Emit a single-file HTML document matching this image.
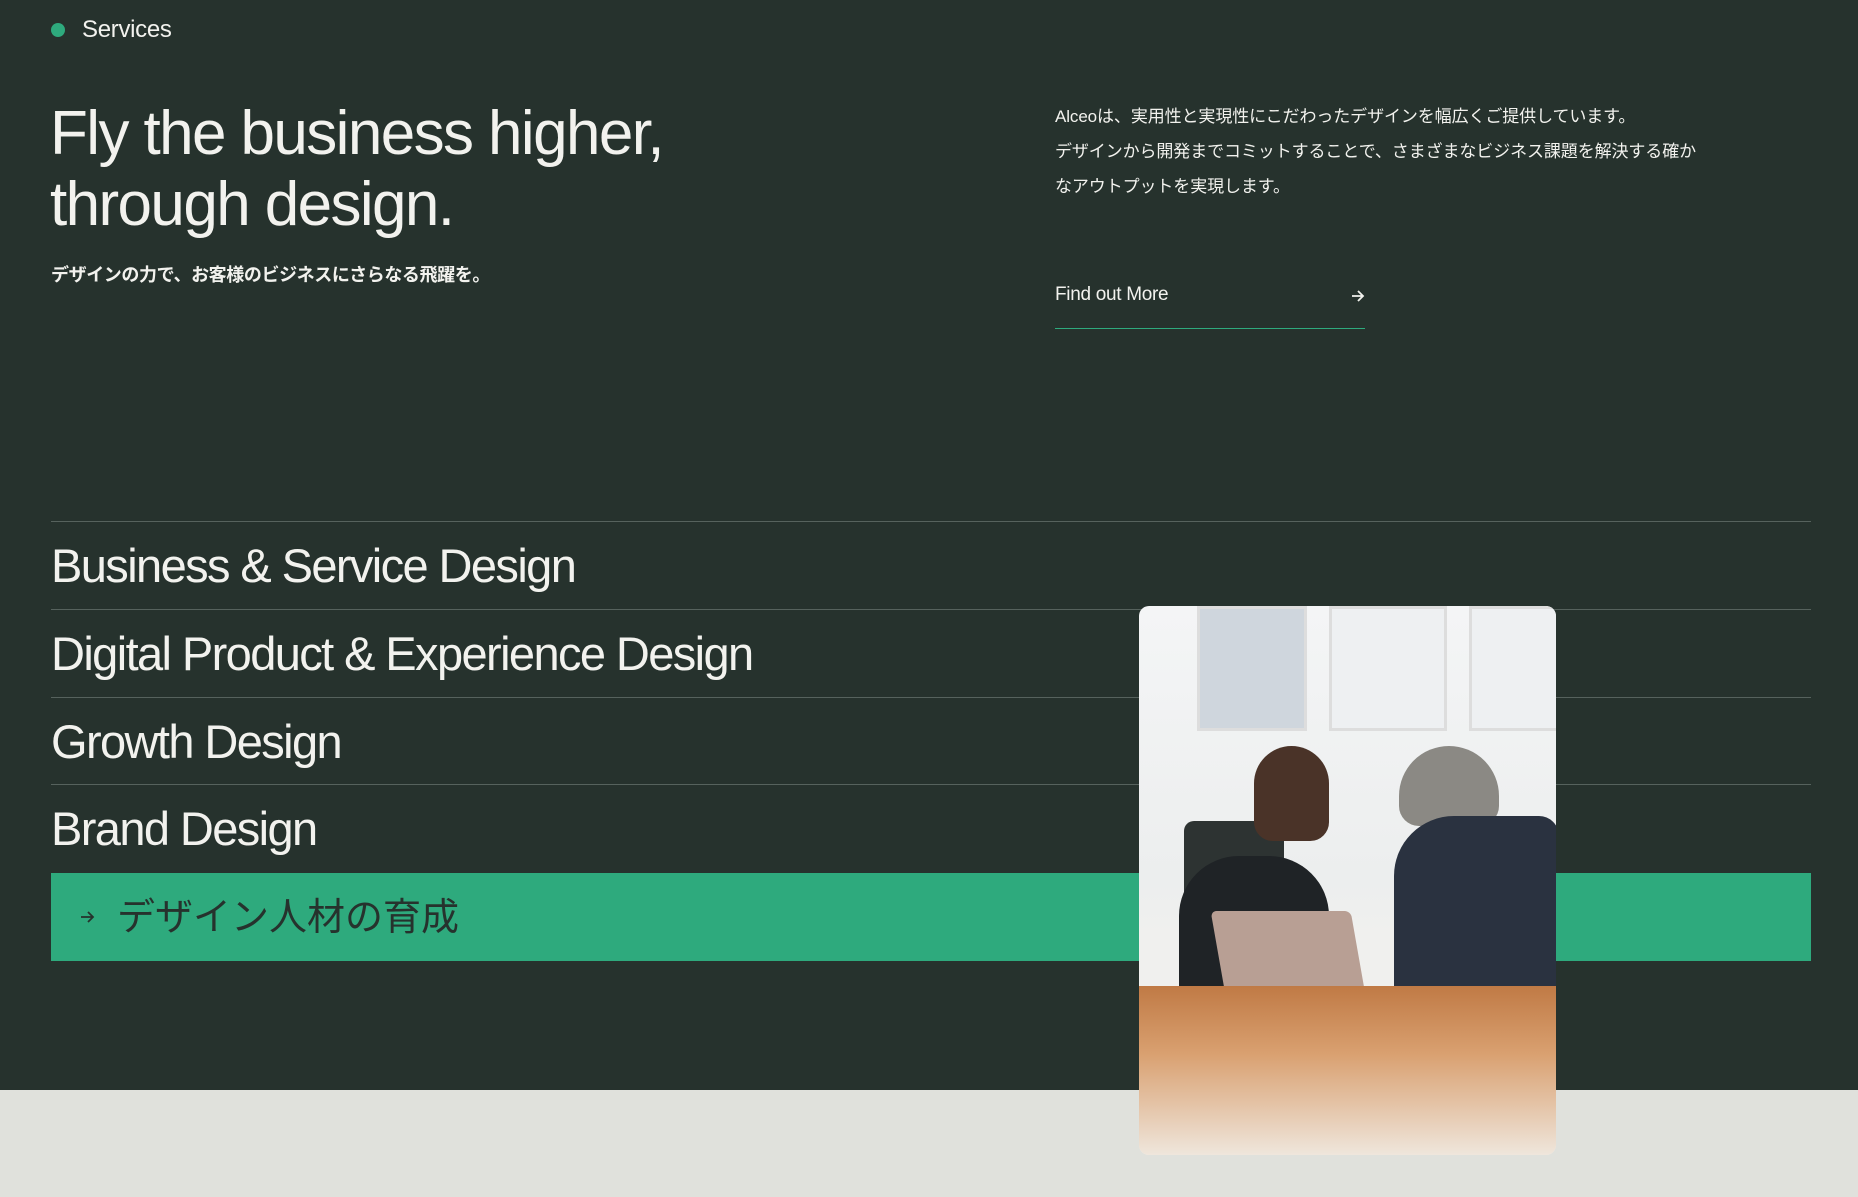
<!DOCTYPE html>
<html><head><meta charset="utf-8"><style>
*{margin:0;padding:0;box-sizing:border-box}
body{width:1858px;height:1197px;background:#e0e1dc;font-family:"Liberation Sans","Noto Sans CJK JP",sans-serif;position:relative;overflow:hidden}
.dark{position:absolute;left:0;top:0;width:1858px;height:1090px;background:#26322d}
.a{position:absolute;color:#f2f2ee;white-space:nowrap}
.line{position:absolute;left:51px;width:1760px;height:1px;background:#56625d}
.item{position:absolute;left:51px;font-size:47px;color:#f2f2ee;line-height:1;letter-spacing:-1.6px}
</style></head><body>
<div class="dark"></div>
<div style="position:absolute;left:51px;top:23px;width:14px;height:14px;border-radius:50%;background:#2eaa7d"></div>
<div class="a" style="left:82px;top:16px;font-size:24px;letter-spacing:-0.3px">Services</div>
<div class="a" style="left:50px;top:98px;font-size:62px;line-height:71px;letter-spacing:-1.6px">Fly the business higher,<br>through design.</div>
<div class="a" style="left:51px;top:261px;font-size:18px;font-weight:bold;letter-spacing:-0.4px">デザインの力で、お客様のビジネスにさらなる飛躍を。</div>
<div class="a" style="left:1055px;top:99px;font-size:17px;line-height:35px;letter-spacing:-0.1px">Alceoは、実用性と実現性にこだわったデザインを幅広くご提供しています。<br>デザインから開発までコミットすることで、さまざまなビジネス課題を解決する確か<br>なアウトプットを実現します。</div>
<div class="a" style="left:1055px;top:284px;font-size:19px;letter-spacing:-0.3px">Find out More</div>
<svg style="position:absolute;left:1350px;top:288px" width="16" height="16" viewBox="0 0 16 16"><path d="M2 8h11M8 3l5 5-5 5" stroke="#f2f2ee" stroke-width="1.8" fill="none"/></svg>
<div style="position:absolute;left:1055px;top:328px;width:310px;height:1px;background:#2eaa7d"></div>
<div class="line" style="top:521px"></div>
<div class="line" style="top:609px"></div>
<div class="line" style="top:697px"></div>
<div class="line" style="top:784px"></div>
<div class="item" style="top:542px">Business &amp; Service Design</div>
<div class="item" style="top:630px">Digital Product &amp; Experience Design</div>
<div class="item" style="top:718px">Growth Design</div>
<div class="item" style="top:805px">Brand Design</div>
<div style="position:absolute;left:51px;top:873px;width:1760px;height:88px;background:#2eaa7d"></div>
<svg style="position:absolute;left:80px;top:910px" width="16" height="14" viewBox="0 0 16 14"><path d="M1 7h12M8 2l5 5-5 5" stroke="#26322d" stroke-width="1.8" fill="none"/></svg>
<div class="a" style="left:117px;top:886px;font-size:38px;color:#26322d">デザイン人材の育成</div>
<div style="position:absolute;left:1139px;top:606px;width:417px;height:549px;border-radius:10px;overflow:hidden;background:linear-gradient(#f4f5f6,#eceeee 50%,#f0f0ee 60%)">
 <div style="position:absolute;left:58px;top:0;width:110px;height:125px;border:3px solid #ddd;background:#cfd6dd"></div>
 <div style="position:absolute;left:190px;top:0;width:118px;height:125px;border:3px solid #ddd;background:#eef0f2"></div>
 <div style="position:absolute;left:330px;top:0;width:90px;height:125px;border:3px solid #ddd;background:#eef0f2"></div>
 <div style="position:absolute;left:45px;top:215px;width:100px;height:130px;background:#2d3332;border-radius:10px"></div>
 <div style="position:absolute;left:40px;top:250px;width:150px;height:150px;background:#1f2326;border-radius:60px 60px 10px 10px"></div>
 <div style="position:absolute;left:115px;top:140px;width:75px;height:95px;background:#4a3328;border-radius:40px 40px 20px 20px"></div>
 <div style="position:absolute;left:260px;top:140px;width:100px;height:80px;background:#8b8984;border-radius:50px 50px 20px 20px"></div>
 <div style="position:absolute;left:255px;top:210px;width:165px;height:170px;background:#2a3240;border-radius:60px 20px 0 0"></div>
 <div style="position:absolute;left:80px;top:305px;width:140px;height:95px;background:#b89f94;border-radius:6px;transform:skewX(10deg)"></div>
 <div style="position:absolute;left:0;top:380px;width:417px;height:169px;background:linear-gradient(#c07a45,#d9a070 40%,#efe6dc)"></div>
</div>
</body></html>
